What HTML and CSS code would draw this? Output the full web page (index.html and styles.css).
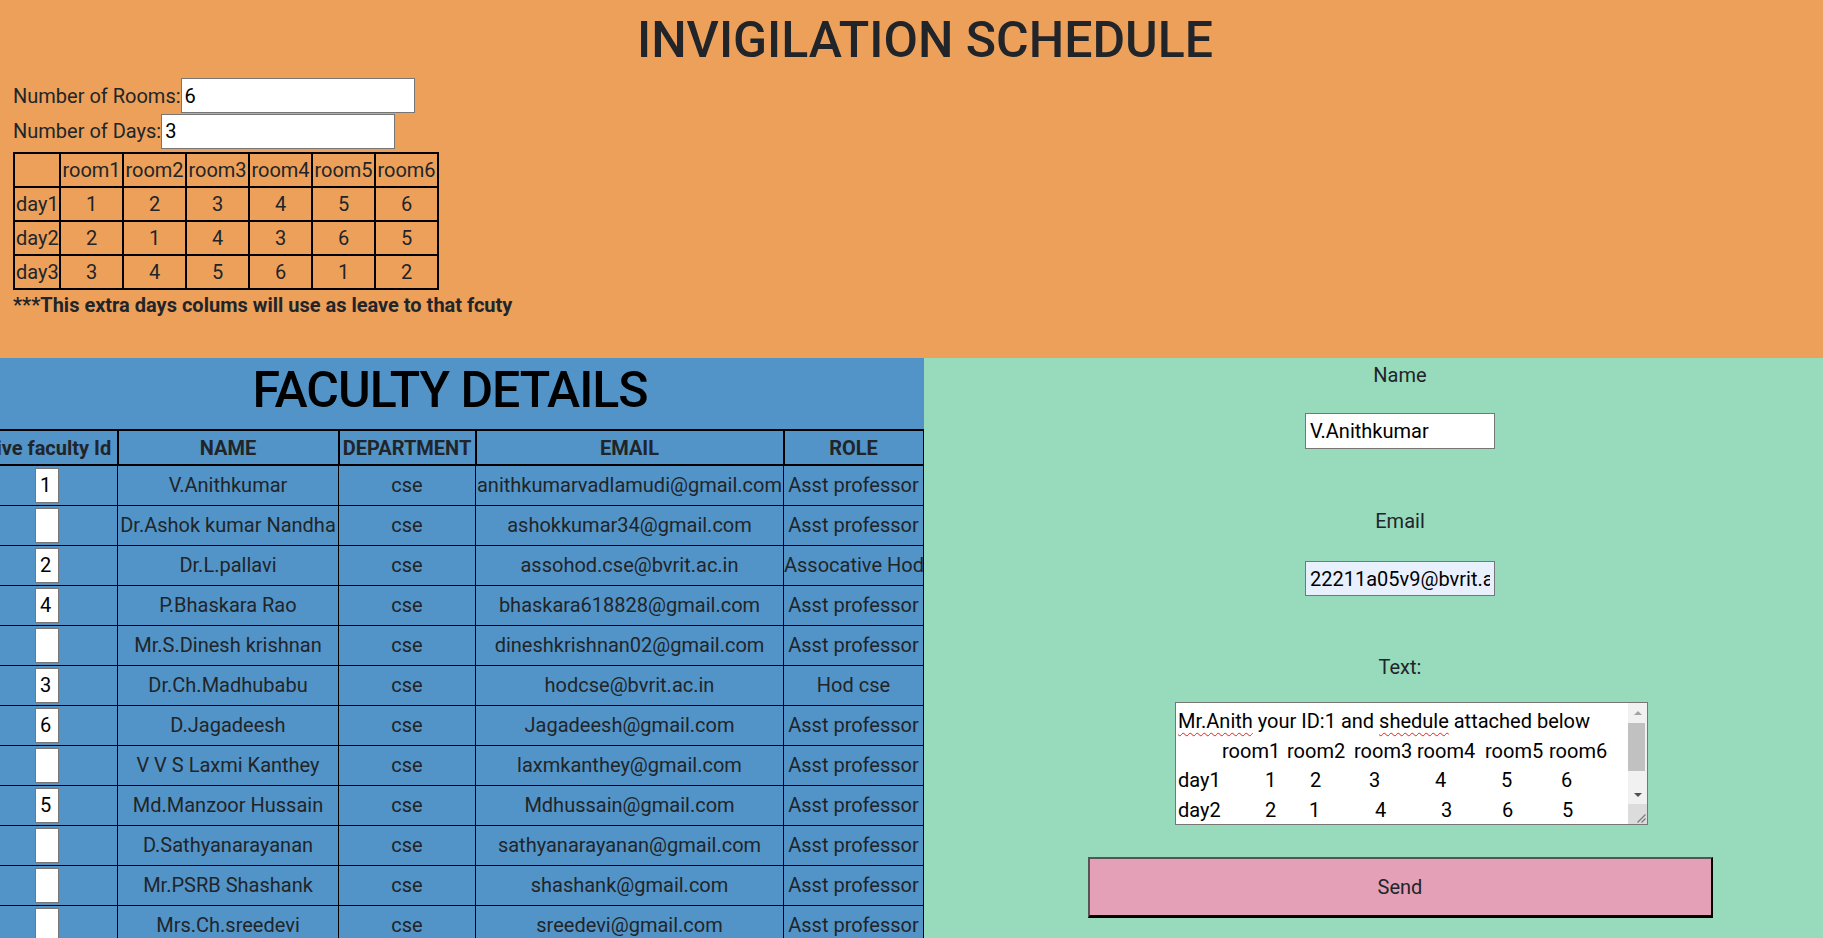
FILE: index.html
```html
<!DOCTYPE html>
<html lang="en">
<head>
<meta charset="utf-8">
<title>Invigilation Schedule</title>
<link rel="stylesheet" href="styles.css">
</head>
<body>
<header class="top">
  <h1 class="title">INVIGILATION SCHEDULE</h1>
  <div class="field"><label for="rooms">Number of Rooms:</label><input id="rooms" class="num" type="text" value="6"></div>
  <div class="field"><label for="days">Number of Days:</label><input id="days" class="num" type="text" value="3"></div>
  <table class="sched">
    <colgroup><col class="sc-first"><col class="sc-col"><col class="sc-col"><col class="sc-col"><col class="sc-col"><col class="sc-col"><col class="sc-col"></colgroup>
    <tr><td></td><td>room1</td><td>room2</td><td>room3</td><td>room4</td><td>room5</td><td>room6</td></tr>
    <tr><td>day1</td><td>1</td><td>2</td><td>3</td><td>4</td><td>5</td><td>6</td></tr>
    <tr><td>day2</td><td>2</td><td>1</td><td>4</td><td>3</td><td>6</td><td>5</td></tr>
    <tr><td>day3</td><td>3</td><td>4</td><td>5</td><td>6</td><td>1</td><td>2</td></tr>
  </table>
  <p class="note">***This extra days colums will use as leave to that fcuty</p>
</header>

<main class="bottom">
  <section class="faculty">
    <h2 class="fac-title">FACULTY DETAILS</h2>
    <table class="fac">
      <colgroup><col class="fc-id"><col class="fc-name"><col class="fc-dept"><col class="fc-email"><col class="fc-role"></colgroup>
      <tr><th>Give faculty Id</th><th>NAME</th><th>DEPARTMENT</th><th>EMAIL</th><th>ROLE</th></tr>
      <tr><td><input class="id-input" type="text" value="1"></td><td>V.Anithkumar</td><td>cse</td><td>anithkumarvadlamudi@gmail.com</td><td>Asst professor</td></tr>
      <tr><td><input class="id-input" type="text" value=""></td><td>Dr.Ashok kumar Nandha</td><td>cse</td><td>ashokkumar34@gmail.com</td><td>Asst professor</td></tr>
      <tr><td><input class="id-input" type="text" value="2"></td><td>Dr.L.pallavi</td><td>cse</td><td>assohod.cse@bvrit.ac.in</td><td>Assocative Hod</td></tr>
      <tr><td><input class="id-input" type="text" value="4"></td><td>P.Bhaskara Rao</td><td>cse</td><td>bhaskara618828@gmail.com</td><td>Asst professor</td></tr>
      <tr><td><input class="id-input" type="text" value=""></td><td>Mr.S.Dinesh krishnan</td><td>cse</td><td>dineshkrishnan02@gmail.com</td><td>Asst professor</td></tr>
      <tr><td><input class="id-input" type="text" value="3"></td><td>Dr.Ch.Madhubabu</td><td>cse</td><td>hodcse@bvrit.ac.in</td><td>Hod cse</td></tr>
      <tr><td><input class="id-input" type="text" value="6"></td><td>D.Jagadeesh</td><td>cse</td><td>Jagadeesh@gmail.com</td><td>Asst professor</td></tr>
      <tr><td><input class="id-input" type="text" value=""></td><td>V V S Laxmi Kanthey</td><td>cse</td><td>laxmkanthey@gmail.com</td><td>Asst professor</td></tr>
      <tr><td><input class="id-input" type="text" value="5"></td><td>Md.Manzoor Hussain</td><td>cse</td><td>Mdhussain@gmail.com</td><td>Asst professor</td></tr>
      <tr><td><input class="id-input" type="text" value=""></td><td>D.Sathyanarayanan</td><td>cse</td><td>sathyanarayanan@gmail.com</td><td>Asst professor</td></tr>
      <tr><td><input class="id-input" type="text" value=""></td><td>Mr.PSRB Shashank</td><td>cse</td><td>shashank@gmail.com</td><td>Asst professor</td></tr>
      <tr><td><input class="id-input" type="text" value=""></td><td>Mrs.Ch.sreedevi</td><td>cse</td><td>sreedevi@gmail.com</td><td>Asst professor</td></tr>
    </table>
  </section>

  <section class="mail">
    <div class="lbl">Name</div>
    <input class="mail-input name-input" type="text" value="V.Anithkumar">
    <div class="lbl email-lbl">Email</div>
    <input class="mail-input email-input" type="text" value="22211a05v9@bvrit.ac.in">
    <div class="lbl text-lbl">Text:</div>
    <div class="textarea" role="textbox" aria-multiline="true">
      <div class="ta-content">
        <div class="ta-line"><span class="sp">Mr.Anith</span> your ID:1 and <span class="sp">shedule</span> attached below</div>
        <div class="ta-line"><span class="cell w44"></span><span class="cell w65">room1</span><span class="cell w67">room2</span><span class="cell w63">room3</span><span class="cell w68">room4</span><span class="cell w64">room5</span><span class="cell">room6</span></div>
        <div class="ta-line"><span class="cell w87">day1</span><span class="cell w45">1</span><span class="cell w59">2</span><span class="cell w66">3</span><span class="cell w66">4</span><span class="cell w60">5</span><span class="cell">6</span></div>
        <div class="ta-line"><span class="cell w87">day2</span><span class="cell w44">2</span><span class="cell w66">1</span><span class="cell w66">4</span><span class="cell w61">3</span><span class="cell w60">6</span><span class="cell">5</span></div>
      </div>
      <div class="ta-scroll" aria-hidden="true">
        <div class="sb-btn"><span class="arr-up"></span></div>
        <div class="sb-track"><div class="sb-thumb"></div></div>
        <div class="sb-btn"><span class="arr-down"></span></div>
        <div class="sb-corner">
          <svg width="19" height="20" viewBox="0 0 19 20"><path d="M9.5 18.5 L17.5 10.5 M13.5 18.5 L17.5 14.5" stroke="#7b7b7b" stroke-width="1.2" fill="none"/></svg>
        </div>
      </div>
    </div>
    <button class="send" type="button">Send</button>
  </section>
</main>
</body>
</html>
```

FILE: styles.css
```css
* { box-sizing: border-box; }

html, body {
  margin: 0;
  padding: 0;
}

body {
  font-family: Roboto, "Liberation Sans", Arial, sans-serif;
  font-size: 20px;
  line-height: 30px;
  color: #212529;
  background: #97dbbc;
  overflow: hidden;
}

/* ---------- top (orange) ---------- */
.top {
  background: #eda05a;
  height: 358px;
  padding: 10px 0 0 13px;
}

.title {
  margin: 0 0 8px;
  padding-left: 14px;
  font-size: 50px;
  line-height: 60px;
  font-weight: 500;
  text-align: center;
  color: #212529;
}

.field {
  display: flex;
  align-items: center;
  height: 35.5px;
}

.field label { white-space: nowrap; }

.num {
  width: 234px;
  height: 35px;
  border: 1px solid #767676;
  padding: 0 3px;
  margin: 0;
  font: inherit;
  color: #000;
  background: #fff;
  outline: none;
}

.sched {
  border-collapse: collapse;
  table-layout: fixed;
  width: 426px;
  margin-top: 3px;
}

.sc-first { width: 46px; }
.sc-col { width: 63px; }

.sched td {
  border: 2px solid #000;
  height: 34px;
  padding: 0 1px;
  text-align: center;
  white-space: nowrap;
  overflow: visible;
}

.note {
  margin: 0;
  font-weight: 700;
}

/* ---------- bottom ---------- */
.bottom {
  display: flex;
  min-height: 580px;
}

.faculty {
  flex: 0 0 924px;
  min-width: 0;
  width: 924px;
  background: #5294c7;
  padding: 2px 24px 0 0;
  display: flex;
  flex-direction: column;
  align-items: center;
}

.fac-title {
  margin: 0 0 9px;
  font-size: 50px;
  line-height: 60px;
  font-weight: 500;
  letter-spacing: -1px;
  color: #000;
}

.fac {
  flex: none;
  border-collapse: collapse;
  table-layout: fixed;
  width: 947px;
}

.fc-id { width: 141px; }
.fc-name { width: 221px; }
.fc-dept { width: 137px; }
.fc-email { width: 308px; }
.fc-role { width: 140px; }

.fac th {
  border: 2px solid #000;
  height: 35px;
  padding: 0;
  font-weight: 700;
  text-align: center;
  white-space: nowrap;
  overflow: visible;
}

.fac td {
  border: 1px solid #000;
  height: 40px;
  padding: 0;
  text-align: center;
  vertical-align: middle;
  white-space: nowrap;
  overflow: visible;
}

.id-input {
  width: 24px;
  height: 35px;
  border: 1px solid #767676;
  padding: 0 0 0 4px;
  margin: 0;
  font: inherit;
  color: #000;
  background: #fff;
  vertical-align: middle;
  outline: none;
}

/* ---------- mail panel (green) ---------- */
.mail {
  flex: 1;
  min-width: 0;
  background: #97dbbc;
  display: flex;
  flex-direction: column;
  align-items: center;
  padding: 2px 0 0 53px;
}

.lbl { line-height: 30px; }
.email-lbl { margin-top: 57px; }
.text-lbl { margin-top: 56px; }

.mail-input {
  width: 190px;
  border: 1px solid #767676;
  padding: 0 4px;
  margin: 0;
  font: inherit;
  color: #000;
  background: #fff;
  outline: none;
}

.name-input { height: 36px; margin-top: 23px; }
.email-input { height: 35px; margin-top: 25px; background: #e8f0fe; }

.textarea {
  display: flex;
  flex: none;
  width: 473px;
  height: 123px;
  margin: 20px 0 0 23px;
  border: 1px solid #767676;
  background: #fff;
  color: #000;
}

.ta-content {
  flex: 1;
  min-width: 0;
  overflow: hidden;
  padding: 4px 0 0 2px;
  line-height: 29.5px;
  white-space: nowrap;
}

.ta-line { height: 29.5px; }

.sp {
  text-decoration: underline wavy #e0201a;
  text-decoration-thickness: 1px;
  text-underline-offset: 4px;
  text-decoration-skip-ink: none;
}

.cell { display: inline-block; }
.w44 { width: 44px; }
.w45 { width: 45px; }
.w59 { width: 59px; }
.w60 { width: 60px; }
.w61 { width: 61px; }
.w63 { width: 63px; }
.w64 { width: 64px; }
.w65 { width: 65px; }
.w66 { width: 66px; }
.w67 { width: 67px; }
.w68 { width: 68px; }
.w87 { width: 87px; }

.ta-scroll {
  flex: 0 0 19px;
  display: flex;
  flex-direction: column;
  background: #f1f1f1;
}

.sb-btn {
  height: 19px;
  display: flex;
  align-items: center;
  justify-content: center;
}

.arr-up {
  width: 0;
  height: 0;
  border-left: 4px solid transparent;
  border-right: 4px solid transparent;
  border-bottom: 4px solid #a3a3a3;
}

.arr-down {
  width: 0;
  height: 0;
  border-left: 4px solid transparent;
  border-right: 4px solid transparent;
  border-top: 4px solid #505050;
}

.sb-track {
  flex: 1;
  padding-top: 1px;
}

.sb-thumb {
  width: 17px;
  height: 48px;
  background: #c1c1c1;
}

.sb-corner {
  height: 20px;
  background: #dcdcdc;
  display: flex;
}

.send {
  flex: none;
  width: 625px;
  height: 61px;
  margin-top: 32px;
  background: #e4a0b7;
  border-style: solid;
  border-width: 2px 2px 3px 2px;
  border-color: #555 #000 #000 #555;
  font: inherit;
  color: #212529;
  padding: 0;
}
```
